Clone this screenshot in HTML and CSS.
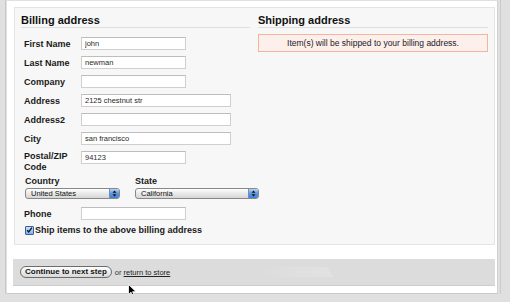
FILE: index.html
```html
<!DOCTYPE html>
<html lang="en">
<head>
    <meta charset="UTF-8">
    <title>Checkout - Address</title>
    <link rel="stylesheet" href="styles.css">
</head>
<body>
<div class="shell">
    <div class="window">
        <div class="panel">
            <div class="col">
                <h2>Billing address</h2>
                <div class="field"><label>First Name</label><input class="short" value="john"></div>
                <div class="field"><label>Last Name</label><input class="short" value="newman"></div>
                <div class="field"><label>Company</label><input class="short" value=""></div>
                <div class="field"><label>Address</label><input class="long" value="2125 chestnut str"></div>
                <div class="field"><label>Address2</label><input class="long" value=""></div>
                <div class="field"><label>City</label><input class="long" value="san francisco"></div>
                <div class="field tall"><label>Postal/ZIP<br>Code</label><input class="short" value="94123"></div>
                <div class="pair">
                    <div class="group country">
                        <span class="cap">Country</span>
                        <div class="select"><span class="val">United States</span><span class="arr"><svg width="5" height="7" viewBox="0 0 5 7"><path d="M2.5 0.5L4.5 2.8H0.5Z M2.5 6.5L0.5 4.2H4.5Z" fill="#111"/></svg></span></div>
                    </div>
                    <div class="group state">
                        <span class="cap">State</span>
                        <div class="select"><span class="val">California</span><span class="arr"><svg width="5" height="7" viewBox="0 0 5 7"><path d="M2.5 0.5L4.5 2.8H0.5Z M2.5 6.5L0.5 4.2H4.5Z" fill="#111"/></svg></span></div>
                    </div>
                </div>
                <div class="field phone"><label>Phone</label><input class="short" value=""></div>
                <div class="ship">
                    <span class="check"><svg width="8" height="8" viewBox="0 0 8 8"><path d="M1.3 4.2L3.1 6.2L6.8 1.2" fill="none" stroke="#0d1a33" stroke-width="1.6"/></svg></span>
                    <span>Ship items to the above billing address</span>
                </div>
            </div>
            <div class="col">
                <h2>Shipping address</h2>
                <p class="notice">Item(s) will be shipped to your billing address.</p>
            </div>
        </div>
        <div class="actions">
            <button class="btn">Continue to next step</button>
            <span class="or">or <a href="#">return to store</a></span>
            <span class="ghost"></span>
        </div>
        <svg class="cursor" width="9" height="13" viewBox="0 0 9 13"><path d="M0.5 0.5V10.5L3 8.2L4.8 12.2L6.3 11.5L4.6 7.7H8Z" fill="#000" stroke="#fff" stroke-width="0.8"/></svg>
    </div>
</div>
</body>
</html>
```

FILE: styles.css
```css
body{margin:0;background:#e0e0e0;font-family:"Liberation Sans",Arial,sans-serif;color:#1a1a1a;}
.shell{margin-left:5px;border-left:1px solid #c8c8c8;padding-left:1px;padding-top:1px;width:493px;border-right:1px solid #cbcbcb;}
.window{position:relative;width:490px;background:#fff;padding:6px 0 7px;border-right:1px solid #d2d2d2;border-bottom:1px solid #c9c9c9;}
.panel{display:grid;grid-template-columns:229px 230px;column-gap:8px;box-sizing:border-box;width:481px;height:238px;margin-left:7px;padding:0 6px;background:#f7f7f7;border:1px solid #e4e4e4;}
.col{min-width:0;}
h2{margin:0 0 6px;padding-top:6px;font-size:11px;line-height:13px;font-weight:bold;color:#111;border-bottom:1px solid #dedede;}
.field{display:flex;align-items:center;height:19px;}
.field label{width:57px;margin-left:3px;font-size:9px;font-weight:bold;color:#1a1a1a;}
.field input{box-sizing:border-box;height:13px;margin:0;padding:0 0 0 3px;border:1px solid #cfcfcf;border-top-color:#bdbdbd;background:#fff;font-family:"Liberation Sans",Arial,sans-serif;font-size:7.5px;color:#2a2a2a;outline:none;}
.short{width:105px;}
.long{width:150px;}
.field.tall{height:auto;align-items:flex-start;padding-top:3px;}
.field.tall label{line-height:11px;}
.pair{display:flex;margin-top:3px;}
.group{display:flex;flex-direction:column;flex-shrink:0;}
.country{margin-left:4px;width:95px;}
.state{margin-left:15px;width:124px;}
.cap{font-size:9px;font-weight:bold;line-height:11px;}
.select{display:flex;box-sizing:border-box;height:11px;margin-top:1px;border:1px solid #888;border-radius:3px;background:linear-gradient(#fefefe,#e9e9e9 50%,#d6d6d6);overflow:hidden;}
.val{flex:1;padding-left:5px;font-size:7.5px;line-height:9px;color:#111;}
.arr{display:flex;align-items:center;justify-content:center;width:9px;background:linear-gradient(#b9d4f5,#5c97e0 50%,#3f80d8);border-left:1px solid #6a8fc4;}
.phone{margin-top:5px;}
.ship{display:flex;align-items:center;height:14px;margin-left:4px;font-size:9px;font-weight:bold;}
.check{display:flex;align-items:center;justify-content:center;box-sizing:border-box;width:9px;height:9px;margin-right:1px;border:1px solid #3d5f8f;border-radius:1px;background:linear-gradient(#cfe2fa,#7fb0ec);}
.notice{margin:0;height:18px;box-sizing:border-box;border:1px solid #f4b69b;background:#fdefeb;text-align:center;font-size:8.5px;line-height:16px;color:#222;}
.actions{display:flex;align-items:center;height:26px;margin:14px 2px 0 6px;padding-left:7px;background:#dcdcdc;border-bottom:1px solid #cdcdcd;}
.btn{height:12px;padding:0 4px;border:1px solid #6c6c6c;border-radius:7px;background:linear-gradient(#ffffff,#ececec 50%,#d8d8d8);font-family:"Liberation Sans",Arial,sans-serif;font-size:8px;font-weight:bold;line-height:10px;color:#111;}
.or{margin-left:3px;font-size:7.5px;color:#333;}
.or a{color:#222;}
.ghost{width:75px;height:10px;margin-left:88px;background:linear-gradient(90deg,#dcdcdc,#e2e2e2);clip-path:polygon(0 0,92% 0,100% 100%,0 100%);}
.cursor{position:absolute;left:121px;top:283px;}
```
